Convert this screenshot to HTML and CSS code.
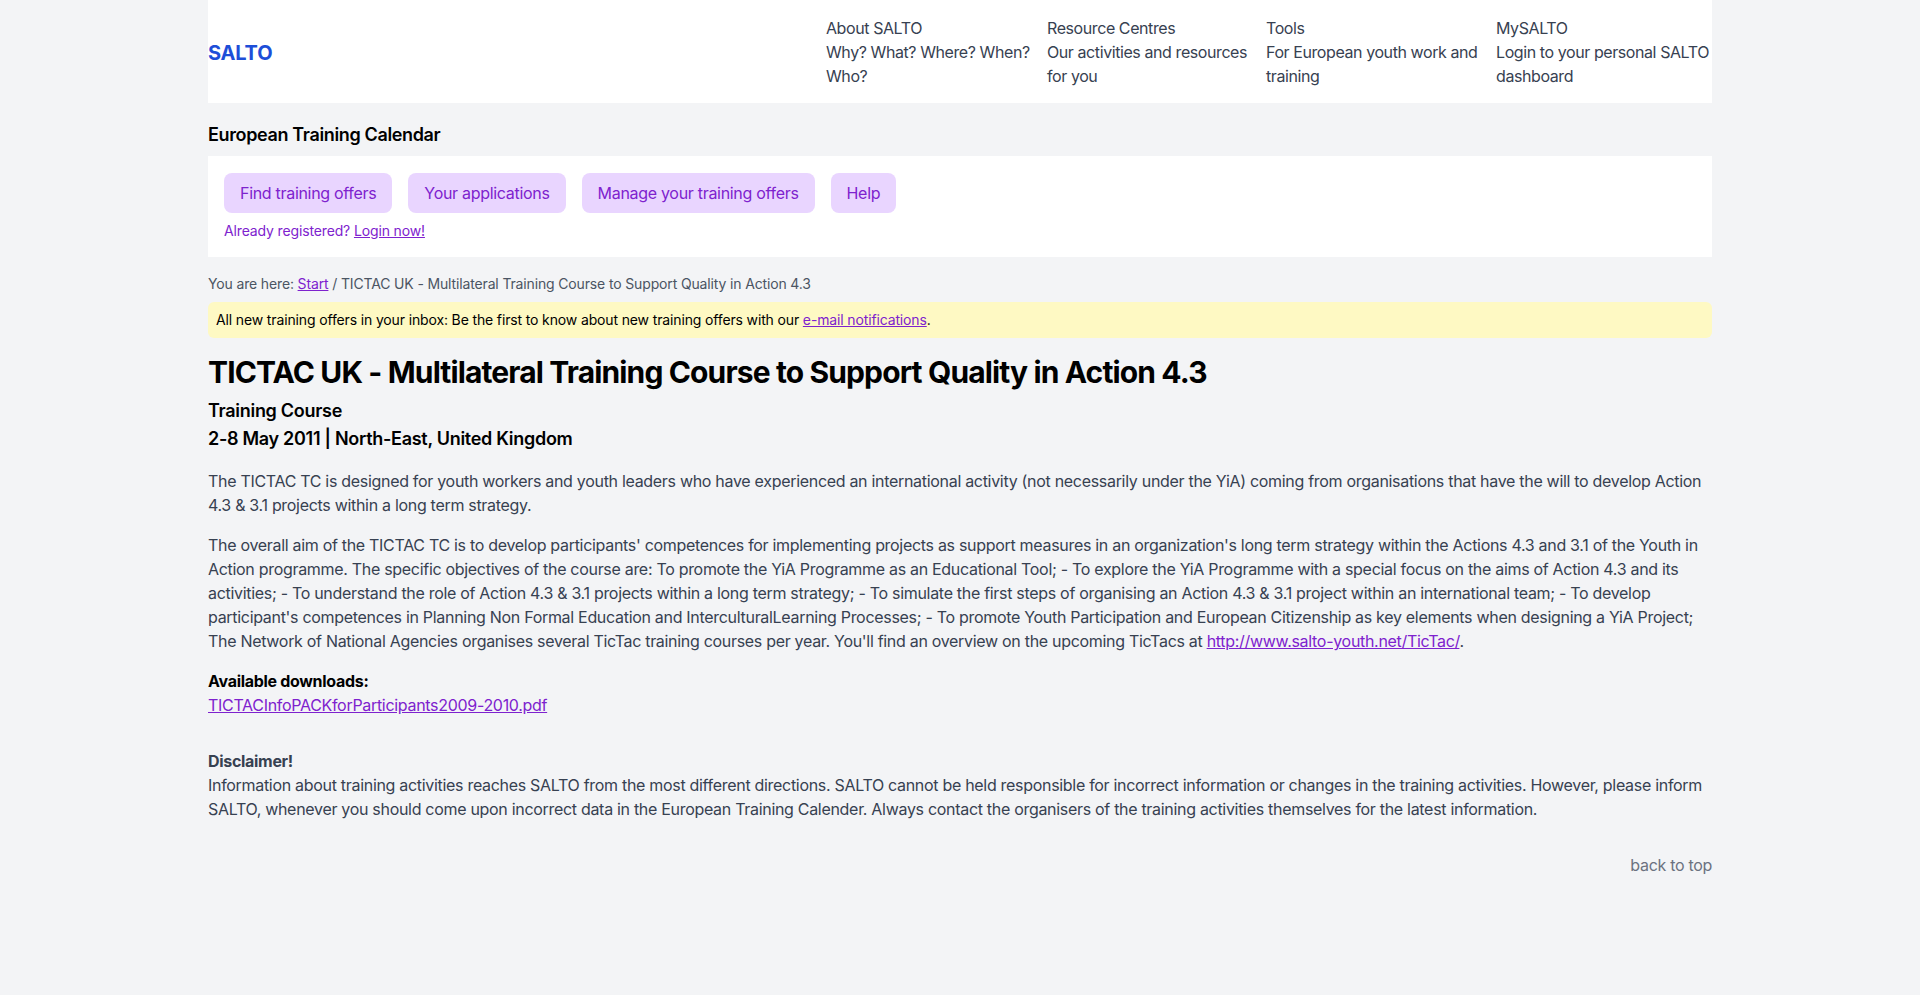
FILE: index.html
```html
<!DOCTYPE html>
<html lang="en">
<head>
<meta charset="utf-8">
<title>TICTAC UK - European Training Calendar - SALTO</title>
<link rel="stylesheet" href="styles.css">
</head>
<body>
<header class="site-header">
  <div class="container header-inner">
    <a class="logo" href="#">SALTO</a>
    <nav class="main-nav">
      <a class="nav-item" href="#"><span class="nav-title">About SALTO</span><span class="nav-sub">Why? What? Where? When? Who?</span></a>
      <a class="nav-item" href="#"><span class="nav-title">Resource Centres</span><span class="nav-sub">Our activities and resources for you</span></a>
      <a class="nav-item" href="#"><span class="nav-title">Tools</span><span class="nav-sub">For European youth work and training</span></a>
      <a class="nav-item" href="#"><span class="nav-title">MySALTO</span><span class="nav-sub">Login to your personal SALTO dashboard</span></a>
    </nav>
  </div>
</header>

<main class="container">
  <h2 class="section-title">European Training Calendar</h2>
  <div class="tool-card">
    <div class="tool-buttons">
      <a class="tool-btn" href="#">Find training offers</a>
      <a class="tool-btn" href="#">Your applications</a>
      <a class="tool-btn" href="#">Manage your training offers</a>
      <a class="tool-btn" href="#">Help</a>
    </div>
    <p class="login-hint">Already registered? <a href="#">Login now!</a></p>
  </div>

  <p class="breadcrumb">You are here: <a href="#">Start</a> / TICTAC UK - Multilateral Training Course to Support Quality in Action 4.3</p>

  <div class="notice">All new training offers in your inbox: Be the first to know about new training offers with our <a href="#">e-mail notifications</a>.</div>

  <h1 class="page-title">TICTAC UK - Multilateral Training Course to Support Quality in Action 4.3</h1>
  <p class="meta">Training Course</p>
  <p class="meta">2-8 May 2011 | North-East, United Kingdom</p>

  <div class="body-text">
    <p>The TICTAC TC is designed for youth workers and youth leaders who have experienced an international activity (not necessarily under the YiA) coming from organisations that have the will to develop Action 4.3 &amp; 3.1 projects within a long term strategy.</p>
    <p>The overall aim of the TICTAC TC is to develop participants' competences for implementing projects as support measures in an organization's long term strategy within the Actions 4.3 and 3.1 of the Youth in Action programme. The specific objectives of the course are: To promote the YiA Programme as an Educational Tool; - To explore the YiA Programme with a special focus on the aims of Action 4.3 and its activities; - To understand the role of Action 4.3 &amp; 3.1 projects within a long term strategy; - To simulate the first steps of organising an Action 4.3 &amp; 3.1 project within an international team; - To develop participant's competences in Planning Non Formal Education and InterculturalLearning Processes; - To promote Youth Participation and European Citizenship as key elements when designing a YiA Project; The Network of National Agencies organises several TicTac training courses per year. You'll find an overview on the upcoming TicTacs at <a href="#">http://www.salto-youth.net/TicTac/</a>.</p>
  </div>

  <div class="downloads">
    <p class="downloads-title">Available downloads:</p>
    <a href="#">TICTACInfoPACKforParticipants2009-2010.pdf</a>
  </div>

  <div class="disclaimer">
    <p class="disclaimer-title">Disclaimer!</p>
    <p>Information about training activities reaches SALTO from the most different directions. SALTO cannot be held responsible for incorrect information or changes in the training activities. However, please inform SALTO, whenever you should come upon incorrect data in the European Training Calender. Always contact the organisers of the training activities themselves for the latest information.</p>
  </div>

  <div class="back-top"><a href="#">back to top</a></div>
</main>
</body>
</html>
```

FILE: styles.css
```css
* { box-sizing: border-box; }

html, body {
  margin: 0;
  padding: 0;
}

body {
  background: #f3f4f6;
  font-family: Inter, "Noto Sans", "Liberation Sans", sans-serif;
  font-size: 16px;
  line-height: 24px;
  letter-spacing: -0.019em;
  color: #374151;
  min-height: 995px;
}

p { margin: 0; }

a { color: #7e22ce; }

.container {
  width: 1504px;
  margin: 0 auto;
}

.site-header .header-inner {
  background: #fff;
  display: flex;
  align-items: center;
  justify-content: space-between;
  padding: 16px 0 15px;
}

.logo {
  color: #1d4ed8;
  font-weight: 700;
  font-size: 20px;
  line-height: 28px;
  letter-spacing: -0.01em;
  text-decoration: none;
  margin-top: 2px;
}

.main-nav {
  display: grid;
  grid-template-columns: 209px 207px 218px 216px;
  column-gap: 12px;
  letter-spacing: -0.026em;
}

.nav-item {
  display: flex;
  flex-direction: column;
  color: #374151;
  text-decoration: none;
}

.section-title {
  margin: 18px 0 7px;
  font-size: 18px;
  line-height: 28px;
  font-weight: 600;
  letter-spacing: -0.02em;
  color: #000;
}

.tool-card {
  background: #fff;
  padding: 17px 16px 16px;
}

.tool-buttons {
  display: flex;
  gap: 16px;
}

.tool-btn {
  background: #e9d5ff;
  color: #7e22ce;
  text-decoration: none;
  padding: 8px 16px;
  border-radius: 8px;
}

.login-hint {
  margin-top: 8px;
  font-size: 14px;
  line-height: 20px;
  letter-spacing: -0.01em;
  color: #7e22ce;
}

.breadcrumb {
  margin-top: 17px;
  font-size: 14px;
  line-height: 20px;
  letter-spacing: -0.0105em;
  color: #4b5563;
}

.notice {
  margin-top: 8px;
  background: #fef9c3;
  border-radius: 6px;
  padding: 8px;
  font-size: 14px;
  line-height: 20px;
  letter-spacing: -0.01em;
  color: #000;
}

.page-title {
  margin: 16px 0 7px;
  font-size: 30px;
  line-height: 36px;
  font-weight: 700;
  letter-spacing: -0.029em;
  color: #000;
}

.meta {
  font-size: 18px;
  line-height: 28px;
  font-weight: 600;
  letter-spacing: -0.016em;
  color: #000;
}

.body-text {
  margin-top: 16px;
  display: flex;
  flex-direction: column;
  gap: 16px;
}

.downloads {
  margin-top: 16px;
  display: flex;
  flex-direction: column;
  align-items: flex-start;
}

.downloads-title {
  font-weight: 700;
  color: #000;
}

.disclaimer {
  margin-top: 32px;
}

.disclaimer-title {
  font-weight: 700;
}

.back-top {
  margin-top: 32px;
  text-align: right;
}

.back-top a {
  color: #6b7280;
  text-decoration: none;
}
```
